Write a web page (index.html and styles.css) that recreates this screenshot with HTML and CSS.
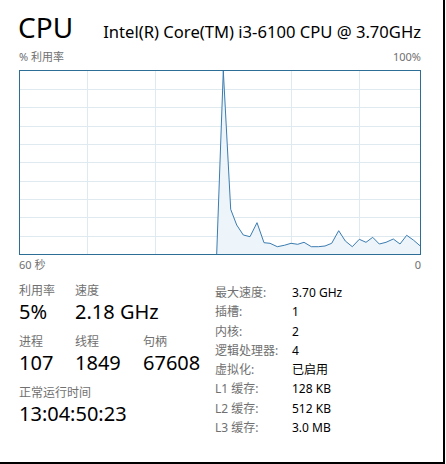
FILE: index.html
```html
<!DOCTYPE html>
<html lang="zh-CN">
<head>
    <meta charset="UTF-8">
    <title>CPU</title>
    <link rel="stylesheet" href="styles.css">
</head>
<body>
    <div class="frame">
        <div class="header">
            <h1 class="title">CPU</h1>
            <span class="model">Intel(R) Core(TM) i3-6100 CPU @ 3.70GHz</span>
        </div>

        <div class="axis">
            <span>% 利用率</span>
            <span>100%</span>
        </div>

        <svg class="graph" width="402" height="185" viewBox="19 70 402 185">
            <g class="grid">
                <line x1="87.5" y1="70" x2="87.5" y2="255" />
                <line x1="155.5" y1="70" x2="155.5" y2="255" />
                <line x1="223.5" y1="70" x2="223.5" y2="255" />
                <line x1="291.5" y1="70" x2="291.5" y2="255" />
                <line x1="359.5" y1="70" x2="359.5" y2="255" />
                <line x1="19" y1="89.5" x2="421" y2="89.5" />
                <line x1="19" y1="107.5" x2="421" y2="107.5" />
                <line x1="19" y1="126.5" x2="421" y2="126.5" />
                <line x1="19" y1="144.5" x2="421" y2="144.5" />
                <line x1="19" y1="162.5" x2="421" y2="162.5" />
                <line x1="19" y1="181.5" x2="421" y2="181.5" />
                <line x1="19" y1="199.5" x2="421" y2="199.5" />
                <line x1="19" y1="217.5" x2="421" y2="217.5" />
                <line x1="19" y1="236.5" x2="421" y2="236.5" />
            </g>
            <polygon class="area" points="216.7,254 223.3,70.7 230.7,209.3 236.7,225 243.3,235 250,236.7 257,222.7 264,242.7 270,243.3 277.3,246.7 284.3,245.3 291,243.3 297.7,244.3 304,242.3 311.3,246.7 318.3,246.7 325,246 331.7,243.3 338.7,230.7 345.3,241 352.3,246.7 359.3,239.3 366,242.3 372.7,237.3 379.3,244 386,242.3 393.3,239 400,244 406.7,235.3 413.3,240 420.3,246 420.3,254" />
            <polyline class="line" points="216.7,254 223.3,70.7 230.7,209.3 236.7,225 243.3,235 250,236.7 257,222.7 264,242.7 270,243.3 277.3,246.7 284.3,245.3 291,243.3 297.7,244.3 304,242.3 311.3,246.7 318.3,246.7 325,246 331.7,243.3 338.7,230.7 345.3,241 352.3,246.7 359.3,239.3 366,242.3 372.7,237.3 379.3,244 386,242.3 393.3,239 400,244 406.7,235.3 413.3,240 420.3,246" />
            <rect class="border" x="19.5" y="70.5" width="401" height="184" />
        </svg>

        <div class="axis axis-bottom">
            <span>60 秒</span>
            <span>0</span>
        </div>

        <div class="details">
            <div class="stats">
                <div class="stat-row">
                    <div class="stat stat-narrow">
                        <div class="label">利用率</div>
                        <div class="value">5%</div>
                    </div>
                    <div class="stat">
                        <div class="label">速度</div>
                        <div class="value">2.18 GHz</div>
                    </div>
                </div>
                <div class="stat-row">
                    <div class="stat stat-narrow">
                        <div class="label">进程</div>
                        <div class="value">107</div>
                    </div>
                    <div class="stat stat-mid">
                        <div class="label">线程</div>
                        <div class="value">1849</div>
                    </div>
                    <div class="stat">
                        <div class="label">句柄</div>
                        <div class="value">67608</div>
                    </div>
                </div>
                <div class="stat-row">
                    <div class="stat">
                        <div class="label">正常运行时间</div>
                        <div class="value">13:04:50:23</div>
                    </div>
                </div>
            </div>

            <table class="specs">
                <tr><td class="spec-name">最大速度:</td><td>3.70 GHz</td></tr>
                <tr><td class="spec-name">插槽:</td><td>1</td></tr>
                <tr><td class="spec-name">内核:</td><td>2</td></tr>
                <tr><td class="spec-name">逻辑处理器:</td><td>4</td></tr>
                <tr><td class="spec-name">虚拟化:</td><td>已启用</td></tr>
                <tr><td class="spec-name">L1 缓存:</td><td>128 KB</td></tr>
                <tr><td class="spec-name">L2 缓存:</td><td>512 KB</td></tr>
                <tr><td class="spec-name">L3 缓存:</td><td>3.0 MB</td></tr>
            </table>
        </div>
    </div>
</body>
</html>
```

FILE: styles.css
```css
body {
    margin: 0;
    background-color: #fff;
    font-family: "Noto Sans", "Noto Sans CJK SC", sans-serif;
    color: #000;
}

.frame {
    width: 445px;
    height: 464px;
    box-sizing: border-box;
    border-right: 2px solid #000;
    border-bottom: 2px solid #000;
    padding: 7px 0 0 19px;
}

.header {
    display: flex;
    align-items: baseline;
    justify-content: space-between;
    width: 402px;
    height: 40px;
}

.title {
    margin: 0 0 0 -1px;
    font-size: 28px;
    line-height: 40px;
    font-weight: normal;
}

.model {
    font-size: 16.6px;
    line-height: 20px;
}

.axis {
    display: flex;
    justify-content: space-between;
    width: 402px;
    margin-top: 2px;
    font-size: 11px;
    line-height: 16px;
    color: #707070;
}

.graph {
    display: block;
    margin-top: 5px;
}

.grid line {
    stroke: #dfe9f0;
    stroke-width: 1;
}

.area {
    fill: #eef5fa;
}

.line {
    fill: none;
    stroke: #3b7cb0;
    stroke-width: 1;
}

.border {
    fill: none;
    stroke: #2c6e96;
    stroke-width: 1;
}

.axis-bottom {
    margin-top: 2px;
}

.details {
    display: flex;
    margin-top: 10px;
}

.stats {
    width: 196px;
}

.stat-row {
    display: flex;
    margin-bottom: 10px;
}

.stat {
    display: flex;
    flex-direction: column;
}

.stat-narrow {
    width: 56px;
}

.stat-mid {
    width: 68px;
}

.label {
    font-size: 12px;
    line-height: 16px;
    color: #707070;
}

.value {
    margin-top: 1px;
    font-size: 20px;
    line-height: 24px;
}

.specs {
    border-collapse: collapse;
    font-size: 12px;
    line-height: 19.3px;
}

.specs td {
    padding: 0;
}

.spec-name {
    width: 77px;
    color: #707070;
}
```
